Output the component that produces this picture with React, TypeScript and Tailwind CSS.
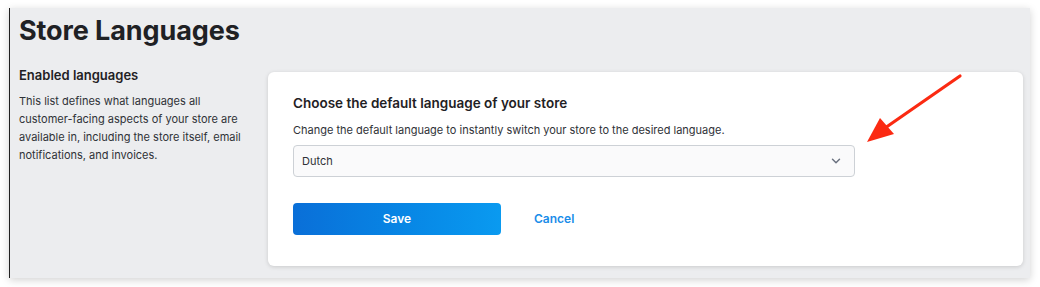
import { ChevronDown } from 'lucide-react';

export default function App() {
  return (
    <div className="w-[1040px] h-[287px] bg-white pt-[8px] pl-[9px]" style={{ fontFamily: 'Inter, "Noto Sans", sans-serif' }}>
      <div className="relative w-[1021px] h-[270px] bg-[#ecedef] border-l border-[#222] shadow-[0_2px_8px_rgba(0,0,0,0.18)] pl-[9px] pr-[7px]">
        <h1 className="text-[27px] leading-[32px] font-bold text-[#1f2124] pt-[7px] tracking-[-0.1px]">Store Languages</h1>
        <div className="flex mt-[25px]">
          <div className="w-[249px] -mt-[5px]">
            <h2 className="text-[13px] leading-[16px] font-semibold text-[#1f2124]">Enabled languages</h2>
            <p className="mt-[9px] text-[11px] leading-[18px] text-[#2f3237] pr-[14px]">
              This list defines what languages all customer-facing aspects of your store are available in, including the store itself, email notifications, and invoices.
            </p>
          </div>
          <div className="w-[755px] h-[194px] bg-white rounded-[6px] shadow-[0_1px_4px_rgba(0,0,0,0.15)] px-[25px] pt-[23px]">
            <h3 className="text-[13.5px] leading-[16px] font-semibold text-[#1f2124]">Choose the default language of your store</h3>
            <p className="mt-[11px] text-[11px] leading-[16px] text-[#2f3237]">Change the default language to instantly switch your store to the desired language.</p>
            <div className="mt-[7px] w-[562px] h-[32px] rounded-[4px] border border-[#cdd1d6] bg-[#fafafb] flex items-center justify-between pl-[8px] pr-[11px]">
              <span className="text-[11px] text-[#2f3237]">Dutch</span>
              <ChevronDown size={14} strokeWidth={2.5} className="text-[#6b7280]" />
            </div>
            <div className="mt-[26px] flex items-center">
              <button className="w-[208px] h-[32px] rounded-[4px] bg-gradient-to-r from-[#0a6fd8] to-[#0a9af0] text-white text-[12px] font-semibold">Save</button>
              <button className="ml-[33px] text-[12px] font-semibold text-[#1a8de9]">Cancel</button>
            </div>
          </div>
        </div>
        <svg className="absolute left-[840px] top-[54px]" width="120" height="90" viewBox="0 0 120 90">
          <line x1="110" y1="14" x2="35" y2="66" stroke="#fb2a12" strokeWidth="3.2" strokeLinecap="round" />
          <polygon points="17,80 30,56 44,72" fill="#fb2a12" />
        </svg>
      </div>
    </div>
  );
}
